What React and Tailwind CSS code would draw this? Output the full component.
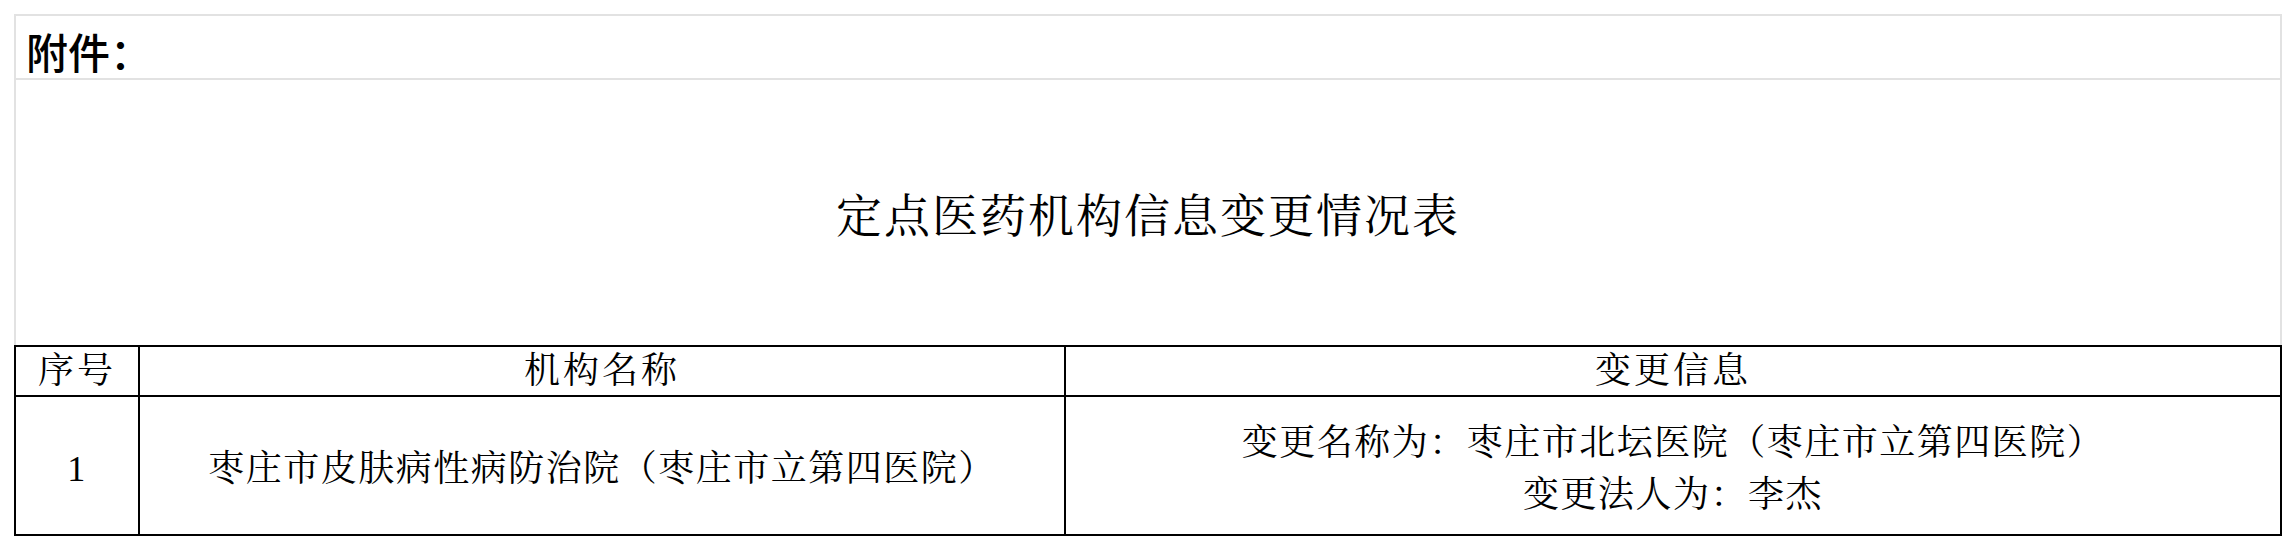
import React from "react";

const serif = { fontFamily: '"Liberation Serif", "Noto Serif CJK SC", "Noto Sans CJK SC", serif' };

export default function App() {
  return (
    <div className="w-[2296px] h-[552px] bg-white pt-[14px] pl-[14px]">
      <div className="w-[2268px] border-x-2 border-t-2 border-[#e2e2e2]">
        <div
          className="h-[64px] border-b-2 border-[#e2e2e2] flex items-center pl-[10px] pt-[6px] text-[42px] font-medium text-black"
          style={{ fontFamily: '"Noto Sans CJK SC", sans-serif' }}
        >
          附件：
        </div>
        <div
          className="h-[265px] flex items-center justify-center pt-[8px] text-[46px] tracking-[2px] text-black"
          style={serif}
        >
          定点医药机构信息变更情况表
        </div>
      </div>
      <div
        className="w-[2268px] border-2 border-black text-[36px] tracking-[1.5px] text-black"
        style={serif}
      >
        <div className="grid grid-cols-[124px_926px_1fr] h-[50px] border-b-2 border-black">
          <div className="border-r-2 border-black flex items-center justify-center leading-none tracking-[3px]">序号</div>
          <div className="border-r-2 border-black flex items-center justify-center leading-none tracking-[3px]">机构名称</div>
          <div className="flex items-center justify-center leading-none tracking-[3px]">变更信息</div>
        </div>
        <div className="grid grid-cols-[124px_926px_1fr] h-[137px]">
          <div className="border-r-2 border-black flex items-center justify-center pt-[6px]">1</div>
          <div className="border-r-2 border-black flex items-center justify-center pt-[6px]">
            枣庄市皮肤病性病防治院（枣庄市立第四医院）
          </div>
          <div className="flex flex-col items-center justify-center leading-[52px] pt-[6px]">
            <div>变更名称为：枣庄市北坛医院（枣庄市立第四医院）</div>
            <div>变更法人为：李杰</div>
          </div>
        </div>
      </div>
    </div>
  );
}
